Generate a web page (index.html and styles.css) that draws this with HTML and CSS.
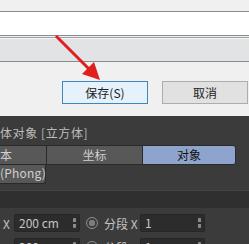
FILE: index.html
```html
<!DOCTYPE html>
<html lang="zh">
<head>
    <meta charset="UTF-8">
    <title>保存</title>
    <link rel="stylesheet" href="styles.css">
</head>
<body>

    <!-- Save dialog -->
    <div class="dialog">
        <div class="field name-field"></div>
        <div class="field type-field"></div>
        <div class="buttons">
            <button class="btn btn-save">保存(S)</button>
            <button class="btn btn-cancel">取消</button>
        </div>
    </div>

    <!-- Attribute panel -->
    <div class="panel">
        <div class="panel-title">体对象 [立方体]</div>
        <div class="tabs">
            <div class="tab tab-basic">本</div>
            <div class="tab tab-coord">坐标</div>
            <div class="tab tab-object active">对象</div>
        </div>
        <div class="tab tab-phong">(Phong)</div>
        <div class="section-bar"></div>

        <div class="row">
            <span class="axis">X</span>
            <div class="input"><span>200 cm</span><span class="spin"></span></div>
            <span class="radio"></span>
            <span class="label">分段 X</span>
            <div class="input small"><span>1</span><span class="spin"></span></div>
        </div>
        <div class="row">
            <span class="axis">Y</span>
            <div class="input"><span>200 cm</span><span class="spin"></span></div>
            <span class="radio"></span>
            <span class="label">分段 Y</span>
            <div class="input small"><span>1</span><span class="spin"></span></div>
        </div>
    </div>

    <!-- Red arrow pointing at the save button -->
    <svg class="arrow" width="249" height="244" viewBox="0 0 249 244">
        <line x1="56" y1="36" x2="90" y2="70" stroke="#e01e1e" stroke-width="3"/>
        <polygon points="100,80 82,74 94,62" fill="#e01e1e"/>
    </svg>

</body>
</html>
```

FILE: styles.css
```css
body {
    margin: 0;
    padding: 0;
    width: 249px;
    height: 244px;
    overflow: hidden;
    position: relative;
    font-family: "Noto Sans CJK SC", "Liberation Sans", sans-serif;
}

.dialog {
    background-color: #f0f0f0;
    height: 116px;
    padding-top: 11px;
    box-sizing: border-box;
}

.field {
    border-top: 1px solid #8a8a8a;
    border-bottom: 1px solid #8a8a8a;
    margin-right: -4px;
}

.name-field {
    background-color: #ffffff;
    height: 23px;
}

.type-field {
    background-color: #e2e3e4;
    height: 23px;
    margin-top: 1px;
    border-top-color: #a0a0a0;
    box-shadow: inset 0 1px 0 #f4f4f4;
}

.buttons {
    display: flex;
    gap: 14px;
    margin-top: 19px;
    padding-left: 62px;
}

.btn {
    height: 23px;
    width: 86px;
    flex-shrink: 0;
    font-family: inherit;
    font-size: 12px;
    color: #222;
    padding: 0;
    line-height: 19px;
}

.btn-save {
    background-color: #e5f1fb;
    border: 1px solid #3f86bd;
}

.btn-cancel {
    background-color: #e1e1e1;
    border: 1px solid #adadad;
}

.panel {
    background-color: #3b3b3b;
    height: 128px;
    color: #c4c4c4;
    font-size: 12px;
    overflow: hidden;
}

.panel-title {
    padding-top: 9px;
    height: 20px;
    line-height: 15px;
    color: #bcbcbc;
    letter-spacing: 0.6px;
}

.tabs {
    display: flex;
    height: 20px;
}

.tab {
    background-color: #585858;
    border: 1px solid #2a2a2a;
    box-sizing: border-box;
    height: 20px;
    line-height: 17px;
    text-align: center;
    color: #d0d0d0;
}

.tab-basic {
    width: 47px;
    text-align: left;
    border-left: none;
    margin-right: -1px;
}

.tab-coord {
    width: 97px;
    margin-right: -1px;
}

.tab-object {
    width: 94px;
}

.tab.active {
    background-color: #8fa4cd;
    color: #111;
    border-radius: 0 3px 3px 0;
}

.tab-phong {
    width: 46px;
    text-align: left;
    border-top: none;
    border-left: none;
    border-radius: 0 0 3px 0;
    height: 19px;
    line-height: 16px;
    letter-spacing: 0.2px;
}

.section-bar {
    margin-top: 6px;
    height: 18px;
    background-color: #2f2f2f;
    border-top: 1px solid #444;
    box-sizing: border-box;
}

.row {
    display: flex;
    align-items: center;
    height: 18px;
    margin-top: 6px;
    color: #c4c4c4;
}

.axis {
    width: 14px;
    padding-left: 3px;
    box-sizing: border-box;
}

.input {
    width: 66px;
    height: 18px;
    box-sizing: border-box;
    background-color: #2c2c2c;
    border: 1px solid #262626;
    border-radius: 2px;
    display: flex;
    align-items: center;
    justify-content: space-between;
    padding: 0 3px 0 4px;
    line-height: 16px;
}

.input.small {
    width: 65px;
}

.spin {
    width: 3px;
    height: 10px;
    background: linear-gradient(#8a8a8a 0 4px, transparent 4px 6px, #8a8a8a 6px);
    border-radius: 1px;
}

.radio {
    width: 12px;
    height: 12px;
    border-radius: 50%;
    border: 1px solid #909090;
    box-sizing: border-box;
    margin-left: 6px;
    background: radial-gradient(circle, #7c7c7c 0 3px, #3b3b3b 3.5px);
}

.label {
    width: 36px;
    padding-left: 6px;
}

.arrow {
    position: absolute;
    left: 0;
    top: 0;
}
```
